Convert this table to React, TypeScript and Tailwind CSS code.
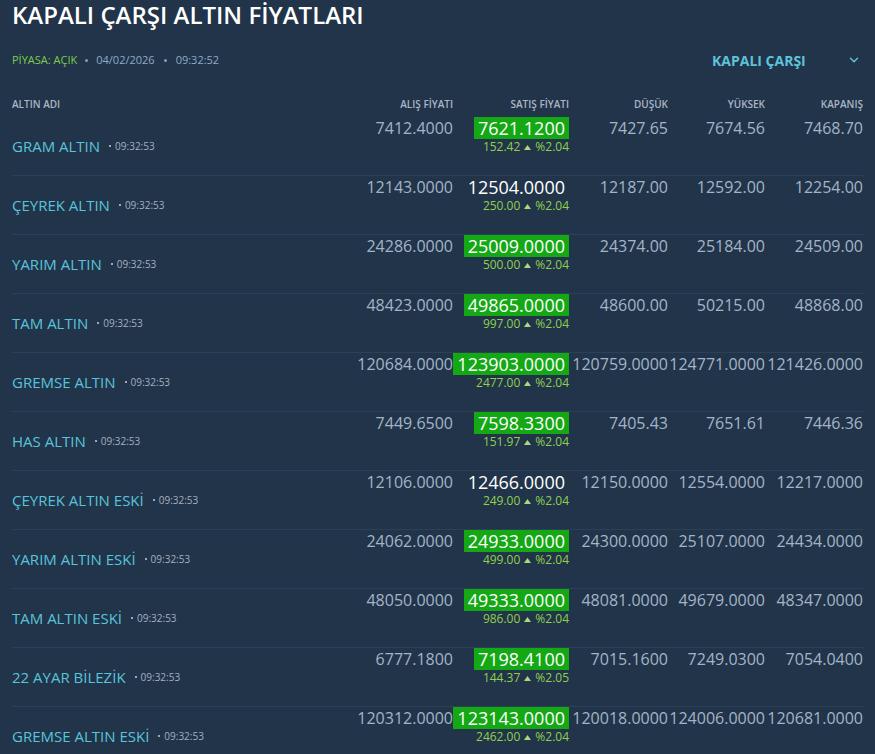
import { ChevronDown } from "lucide-react";

type Row = {
  name: string;
  buy: string;
  sell: string;
  boxed: boolean;
  change: string;
  pct: string;
  low: string;
  high: string;
  close: string;
};

const rows: Row[] = [
  { name: "GRAM ALTIN", buy: "7412.4000", sell: "7621.1200", boxed: true, change: "152.42", pct: "%2.04", low: "7427.65", high: "7674.56", close: "7468.70" },
  { name: "ÇEYREK ALTIN", buy: "12143.0000", sell: "12504.0000", boxed: false, change: "250.00", pct: "%2.04", low: "12187.00", high: "12592.00", close: "12254.00" },
  { name: "YARIM ALTIN", buy: "24286.0000", sell: "25009.0000", boxed: true, change: "500.00", pct: "%2.04", low: "24374.00", high: "25184.00", close: "24509.00" },
  { name: "TAM ALTIN", buy: "48423.0000", sell: "49865.0000", boxed: true, change: "997.00", pct: "%2.04", low: "48600.00", high: "50215.00", close: "48868.00" },
  { name: "GREMSE ALTIN", buy: "120684.0000", sell: "123903.0000", boxed: true, change: "2477.00", pct: "%2.04", low: "120759.0000", high: "124771.0000", close: "121426.0000" },
  { name: "HAS ALTIN", buy: "7449.6500", sell: "7598.3300", boxed: true, change: "151.97", pct: "%2.04", low: "7405.43", high: "7651.61", close: "7446.36" },
  { name: "ÇEYREK ALTIN ESKİ", buy: "12106.0000", sell: "12466.0000", boxed: false, change: "249.00", pct: "%2.04", low: "12150.0000", high: "12554.0000", close: "12217.0000" },
  { name: "YARIM ALTIN ESKİ", buy: "24062.0000", sell: "24933.0000", boxed: true, change: "499.00", pct: "%2.04", low: "24300.0000", high: "25107.0000", close: "24434.0000" },
  { name: "TAM ALTIN ESKİ", buy: "48050.0000", sell: "49333.0000", boxed: true, change: "986.00", pct: "%2.04", low: "48081.0000", high: "49679.0000", close: "48347.0000" },
  { name: "22 AYAR BİLEZİK", buy: "6777.1800", sell: "7198.4100", boxed: true, change: "144.37", pct: "%2.05", low: "7015.1600", high: "7249.0300", close: "7054.0400" },
  { name: "GREMSE ALTIN ESKİ", buy: "120312.0000", sell: "123143.0000", boxed: true, change: "2462.00", pct: "%2.04", low: "120018.0000", high: "124006.0000", close: "120681.0000" },
];

const cols = "grid grid-cols-[1fr_98px_116px_99px_97px_98px]";

export default function App() {
  return (
    <div className="min-h-screen bg-[#223449] px-3 text-[#a3b4c8]" style={{ fontFamily: '"Open Sans", sans-serif' }}>
      <h1 className="h-[30px] text-[24px] font-semibold leading-[30px] text-white">KAPALI ÇARŞI ALTIN FİYATLARI</h1>

      <div className="mt-[20px] flex h-[20px] items-center justify-between">
        <div className="flex items-center text-[11px]">
          <span className="text-[#7dcc4b]">PİYASA: AÇIK</span>
          <span className="mx-[8px] h-[3px] w-[3px] rounded-full bg-[#8a9bb0]" />
          <span className="text-[#8fabc9]">04/02/2026</span>
          <span className="mx-[9px] h-[3px] w-[3px] rounded-full bg-[#8a9bb0]" />
          <span className="text-[#8fabc9]">09:32:52</span>
        </div>
        <div className="flex w-[151px] items-center justify-between text-[14px] font-bold text-[#5cc3da]">
          <span>KAPALI ÇARŞI</span>
          <ChevronDown className="mr-[2px] h-[14px] w-[14px]" strokeWidth={2.5} />
        </div>
      </div>

      <div className={`${cols} mt-[21px] h-[26px] items-center text-[10px] font-semibold text-[#a9b6c6]`}>
        <div>ALTIN ADI</div>
        <div className="text-right">ALIŞ FİYATI</div>
        <div className="text-right">SATIŞ FİYATI</div>
        <div className="text-right">DÜŞÜK</div>
        <div className="text-right">YÜKSEK</div>
        <div className="text-right">KAPANIŞ</div>
      </div>

      {rows.map((r) => (
        <div key={r.name} className={`${cols} h-[59px] border-b border-[#2c405a]`}>
          <div className="flex items-center">
            <span className="text-[15px] text-[#58c4dc]">{r.name}</span>
            <span className="ml-[9px] mr-[4px] h-[2px] w-[2px] bg-[#9aa9bb]" />
            <span className="text-[10px] text-[#a3b0c0]">09:32:53</span>
          </div>
          <div className="text-right text-[16px] leading-[22px]">{r.buy}</div>
          <div className="flex flex-col items-end">
            <span
              className={`text-[18px] leading-[22px] text-white ${r.boxed ? "bg-[#15a815] px-[4px]" : "pr-[4px]"}`}
            >
              {r.sell}
            </span>
            <span className="flex items-center gap-[4px] text-[12px] leading-[16px] text-[#8fd14f]">
              <span>{r.change}</span>
              <svg width="7" height="5" viewBox="0 0 7 5" className="fill-[#a6dc78]">
                <path d="M3.5 0 L7 5 L0 5 Z" />
              </svg>
              <span>{r.pct}</span>
            </span>
          </div>
          <div className="text-right text-[16px] leading-[22px]">{r.low}</div>
          <div className="text-right text-[16px] leading-[22px]">{r.high}</div>
          <div className="text-right text-[16px] leading-[22px]">{r.close}</div>
        </div>
      ))}
    </div>
  );
}
